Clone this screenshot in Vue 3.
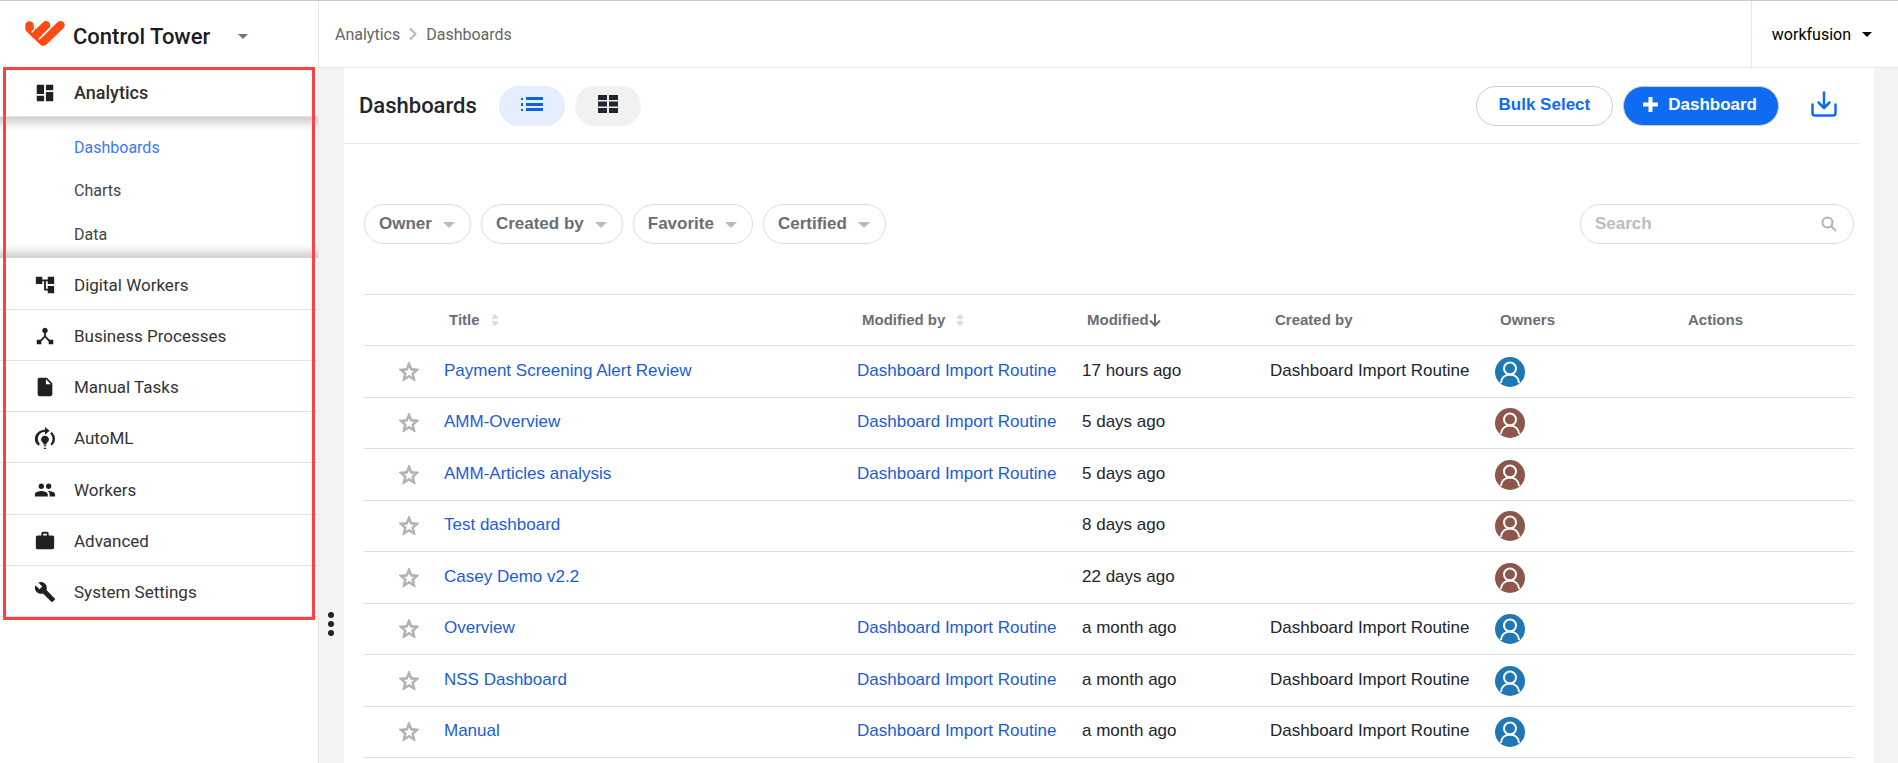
<template>
  <div class="page">
    <aside class="sidebar">
      <div class="brand">
        <svg class="logo" viewBox="0 0 40 25" width="40" height="25" fill="none" stroke-linecap="round" stroke-linejoin="round">
          <path d="M4.500 4.500 L4.500 7.500 L18 20.500 M21 4.200 L11 14 M35.500 4.200 L18.500 20.500" stroke="#ff4b12" stroke-width="8.500" />
          <path d="M10.500 5.500 Q10 8.500 7 11 M14.300 18 L25 7.500" stroke="#fff" stroke-width="1.500" />
        </svg>
        <h1>Control Tower</h1>
        <button class="brand-toggle" type="button" aria-label="Switch application"><i class="caret"></i></button>
      </div>

      <nav class="menu">
        <a href="#" class="item current">
          <svg class="icon" viewBox="0 0 24 24"><path :d="icons.analytics" /></svg>
          <span>Analytics</span>
        </a>
        <div class="submenu">
          <a v-for="s in subItems" :key="s" href="#" :class="{ active: s === 'Dashboards' }">{{ s }}</a>
        </div>
        <a v-for="m in menu" :key="m.label" href="#" class="item">
          <svg class="icon" viewBox="0 0 24 24"><path :d="icons[m.icon]" /></svg>
          <span>{{ m.label }}</span>
        </a>
      </nav>
    </aside>

    <div class="main">
      <header class="topbar">
        <div class="crumbs">
          <a href="#">Analytics</a>
          <svg viewBox="0 0 8 14" width="8" height="14"><path d="M1 1.500l5.500 5.500L1 12.500" fill="none" stroke="#b5b5b5" stroke-width="2" /></svg>
          <span>Dashboards</span>
        </div>
        <button class="user" type="button">workfusion<i class="caret"></i></button>
      </header>

      <div class="body">
        <button class="handle" type="button" aria-label="Resize menu"><i></i><i></i><i></i></button>

        <section class="content">
          <div class="title-bar">
            <h2>Dashboards</h2>
            <button class="view on" type="button" aria-label="List view">
              <svg viewBox="0 0 22 15" width="22" height="15" fill="#0f62e6">
                <path d="M0 1h2v2H0zM5 0h17v3H5zM0 6h2v3H0zM5 6h17v3H5zM0 12h2v2H0zM5 11h17v3H5z" />
              </svg>
            </button>
            <button class="view" type="button" aria-label="Card view">
              <svg viewBox="0 0 20 18" width="20" height="18" fill="#20252e">
                <path d="M0 0h9v5H0zM11 0h9v5h-9zM0 6.500h9v5H0zM11 6.500h9v5h-9zM0 13h9v5H0zM11 13h9v5h-9z" />
              </svg>
            </button>
            <div class="actions">
              <button class="btn" type="button">Bulk Select</button>
              <button class="btn primary" type="button">
                <svg viewBox="0 0 15 15" width="15" height="15"><path d="M7.500 0v15M0 7.500h15" stroke="#fff" stroke-width="4" /></svg>
                Dashboard
              </button>
              <button class="import" type="button" aria-label="Import dashboards">
                <svg viewBox="0 0 26 26" width="26" height="26" fill="none" stroke="#0f6bf2" stroke-width="2.500" stroke-linecap="round" stroke-linejoin="round">
                  <path d="M13 1.500v15M7.500 11.500l5.500 5.500 5.500-5.500" />
                  <path d="M1.500 13.500V22q0 2.500 2.500 2.500h18q2.500 0 2.500-2.500v-8.500" />
                </svg>
              </button>
            </div>
          </div>

          <div class="filters">
            <button v-for="f in filters" :key="f" class="filter" type="button">{{ f }}<i class="caret"></i></button>
            <label class="search">
              <input type="text" placeholder="Search" aria-label="Search" />
              <svg viewBox="0 0 16 16" width="16" height="16" fill="none" stroke="#b2b2b2" stroke-width="2">
                <circle cx="6.500" cy="6.500" r="5" /><path d="M10 10l5 5" />
              </svg>
            </label>
          </div>

          <table>
            <colgroup>
              <col class="c-star" /><col /><col class="c-wide" /><col class="c-mid" />
              <col class="c-wide" /><col class="c-mid" /><col class="c-last" />
            </colgroup>
            <thead>
              <tr>
                <th></th>
                <th>Title<svg class="sort" viewBox="0 0 8 14"><path :d="icons.sort" /></svg></th>
                <th>Modified by<svg class="sort" viewBox="0 0 8 14"><path :d="icons.sort" /></svg></th>
                <th>Modified<svg class="down" viewBox="0 0 12 14"><path d="M6 1v11M1 7.500l5 5 5-5" /></svg></th>
                <th>Created by</th>
                <th>Owners</th>
                <th>Actions</th>
              </tr>
            </thead>
            <tbody>
              <tr v-for="r in rows" :key="r.title">
                <td class="star-cell">
                  <button class="star" type="button" :aria-label="'Favorite ' + r.title">
                    <svg viewBox="0 0 24 24" width="24" height="24"><path :d="icons.star" /></svg>
                  </button>
                </td>
                <td><a href="#">{{ r.title }}</a></td>
                <td><a v-if="r.by" href="#">{{ r.by }}</a></td>
                <td>{{ r.modified }}</td>
                <td>{{ r.created }}</td>
                <td class="owner-cell">
                  <span class="avatar" :class="r.created ? 'blue' : 'brown'">
                    <svg viewBox="0 0 30 30" width="30" height="30" fill="none" stroke="#fff" stroke-width="2">
                      <circle cx="15" cy="11.500" r="6" />
                      <path d="M6 26c0-5 4-8.500 9-8.500s9 3.500 9 8.500" />
                    </svg>
                  </span>
                </td>
                <td></td>
              </tr>
            </tbody>
          </table>
        </section>
      </div>
    </div>
  </div>
</template>

<script setup>
const subItems = ['Dashboards', 'Charts', 'Data']

const menu = [
  { label: 'Digital Workers', icon: 'digital' },
  { label: 'Business Processes', icon: 'process' },
  { label: 'Manual Tasks', icon: 'file' },
  { label: 'AutoML', icon: 'automl' },
  { label: 'Workers', icon: 'people' },
  { label: 'Advanced', icon: 'bag' },
  { label: 'System Settings', icon: 'wrench' },
]

const filters = ['Owner', 'Created by', 'Favorite', 'Certified']

const routine = 'Dashboard Import Routine'
const rows = [
  { title: 'Payment Screening Alert Review', by: routine, modified: '17 hours ago', created: routine },
  { title: 'AMM-Overview', by: routine, modified: '5 days ago' },
  { title: 'AMM-Articles analysis', by: routine, modified: '5 days ago' },
  { title: 'Test dashboard', modified: '8 days ago' },
  { title: 'Casey Demo v2.2', modified: '22 days ago' },
  { title: 'Overview', by: routine, modified: 'a month ago', created: routine },
  { title: 'NSS Dashboard', by: routine, modified: 'a month ago', created: routine },
  { title: 'Manual', by: routine, modified: 'a month ago', created: routine },
]

const icons = {
  analytics: 'M3 13h8V3H3v10zm0 8h8v-6H3v6zm10 0h8V11h-8v10zm0-18v6h8V3h-8z',
  digital: 'M22 11V3h-7v3H9V3H2v8h7V8h2v10h4v3h7v-8h-7v3h-2V8h2v3h7z',
  process: 'M17 16l-4-4V8.820C14.160 8.400 15 7.300 15 6c0-1.660-1.340-3-3-3S9 4.340 9 6c0 1.300.84 2.400 2 2.820V12l-4 4H3v5h5v-3.050l4-4.200 4 4.200V21h5v-5h-4z',
  file: 'M6 2c-1.100 0-1.990.9-1.990 2L4 20c0 1.100.89 2 1.990 2H18c1.100 0 2-.9 2-2V8l-6-6H6zm7 7V3.500L18.500 9H13z',
  automl: 'M10.500 20h3v1h-3zM10.800 24h2.400v-1.500h-2.400zM12 9.500c-2.500 0-4.300 1.900-4.300 4.200 0 2.500 2.500 2.900 2.800 5.300h3c.3-2.400 2.800-2.800 2.800-5.300 0-2.300-1.800-4.200-4.300-4.200zM12 3V0l5 4.200-5 4.200V5.300c-4.200 0-7.700 3.400-7.700 7.700 0 2.200.9 4.100 2.300 5.500L5 20.200C2.100 18.400 1 15.800 1 13 1 7.500 6 3 12 3zM19.300 5.500l-1.800 1.700c1.700 1.400 2.700 3.500 2.700 5.800 0 2.200-.9 4.100-2.300 5.500l1.600 1.700c1.900-1.800 3.400-4.400 3.400-7.200 0-3-1.500-5.700-3.600-7.500z',
  people: 'M16 11c1.660 0 2.990-1.340 2.990-3S17.660 5 16 5c-1.660 0-3 1.340-3 3s1.340 3 3 3zm-8 0c1.660 0 2.990-1.340 2.990-3S9.660 5 8 5C6.340 5 5 6.340 5 8s1.340 3 3 3zm0 2c-2.330 0-7 1.170-7 3.500V19h14v-2.500c0-2.330-4.670-3.500-7-3.500zm8 0c-.29 0-.62.02-.97.05 1.160.84 1.970 1.970 1.970 3.450V19h6v-2.500c0-2.330-4.670-3.500-7-3.500z',
  bag: 'M20 6h-4V4c0-1.110-.89-2-2-2h-4c-1.110 0-2 .89-2 2v2H4c-1.110 0-1.990.89-1.990 2L2 19c0 1.110.89 2 2 2h16c1.110 0 2-.89 2-2V8c0-1.110-.89-2-2-2zm-6 0h-4V4h4v2z',
  wrench: 'M22.700 19l-9.100-9.100c.9-2.300.4-5-1.500-6.900-2-2-5-2.400-7.400-1.300L9 6 6 9 1.600 4.700C.4 7.100.9 10.100 2.900 12.100c1.900 1.900 4.600 2.400 6.900 1.500l9.100 9.100c.4.4 1 .4 1.400 0l2.300-2.300c.5-.4.5-1.100.1-1.400z',
  star: 'M22 9.240l-7.190-.62L12 2 9.190 8.630 2 9.240l5.460 4.730L5.820 21 12 17.270 18.180 21l-1.630-7.030L22 9.240zM12 15.400l-3.760 2.270 1-4.280-3.320-2.880 4.380-.38L12 6.100l1.710 4.040 4.380.38-3.320 2.880 1 4.280L12 15.400z',
  sort: 'M4 1Q7 2.500 7 6H1Q1 2.500 4 1zM1 8h6Q7 11.500 4 13 1 11.500 1 8z',
}
</script>

<style>
body { background: #fff; }
</style>

<style scoped>
.page { display: flex; min-height: 100vh; box-sizing: border-box; border-top: 1px solid #ccc; font-family: Roboto, sans-serif; color: #20252e; overflow: hidden; }
.page * { box-sizing: border-box; }
a { color: inherit; text-decoration: none; }
button { padding: 0; border: 0; background: none; font-family: inherit; color: inherit; cursor: pointer; }
svg { display: block; flex: none; }

.caret { display: inline-block; border: 5px solid transparent; border-top-color: currentColor; border-bottom: 0; }

.sidebar { width: 319px; flex: none; border-right: 1px solid #e6e6e6; }
.brand { display: flex; align-items: center; height: 66px; padding-left: 25px; color: #1c1c1c; }
.logo { margin-bottom: 2px; }
.brand h1 { margin: 4px 0 0 8px; font-size: 22px; font-weight: 500; }
.brand-toggle { margin-left: 28px; color: #70757a; }

.menu { position: relative; padding-bottom: 3px; }
.menu::after { content: ''; position: absolute; inset: 0 3px; border: 3px solid #fb4144; pointer-events: none; }
.item { display: flex; align-items: center; gap: 18px; height: 51px; padding: 2px 0 0 34px; border-bottom: 1px solid #e3e3e3; font-size: 17px; color: #333; }
.item:nth-child(4n+3) { height: 52px; }
.icon { width: 22px; height: 22px; fill: #231f20; }
.item.current { height: 50px; font-size: 18px; font-weight: 500; color: #2e2e2e; }
.submenu { display: flex; flex-direction: column; height: 141px; padding: 9px 0 2px 74px; font-size: 16px; color: #444; box-shadow: inset 0 14px 10px -8px #ccc, inset 0 -14px 10px -8px #ccc; }
.submenu a { flex: 1; display: flex; align-items: center; }
.submenu .active { color: #3b78ff; }

.main { flex: 1; min-width: 0; display: flex; flex-direction: column; }
.topbar { display: flex; justify-content: space-between; height: 67px; border-bottom: 1px solid #e6e6e6; }
.crumbs { display: flex; align-items: center; gap: 9px; padding-left: 16px; font-size: 16px; color: #666; }
.user { display: flex; align-items: center; gap: 11px; padding: 0 26px 0 20px; border-left: 1px solid #e6e6e6; font-size: 16px; color: #000; }

.body { flex: 1; display: flex; padding-right: 24px; background: #f4f4f4; }
.handle { width: 25px; display: flex; flex-direction: column; justify-content: flex-end; align-items: center; gap: 3px; padding: 0 2px 127px 0; }
.handle i { width: 6px; height: 6px; border-radius: 50%; background: #222; }
.content { flex: 1; min-width: 0; background: #fff; font-family: "Liberation Sans", Arial, sans-serif; }

.title-bar { display: flex; align-items: center; gap: 10px; height: 76px; margin-right: 15px; padding-left: 15px; border-bottom: 1px solid #e6e6e6; }
.title-bar h2 { margin: 0 12px 0 0; font: 500 22px Roboto, sans-serif; }
.view { display: flex; align-items: center; justify-content: center; width: 66px; height: 40px; padding-bottom: 3px; border-radius: 20px; background: #f1f1f1; }
.view.on { background: #e4eefc; }
.actions { display: flex; align-items: center; gap: 10px; margin-left: auto; padding-right: 22px; }
.btn { display: flex; align-items: center; gap: 10px; height: 40px; padding: 0 22px 2px; border: 1px solid #ccc; border-radius: 20px; font-size: 17px; font-weight: bold; color: #0f6bf2; }
.btn.primary { padding: 0 21px 2px 19px; background: #0f6bf2; color: #fff; }
.import { margin-left: 22px; padding-bottom: 4px; }

.filters { display: flex; gap: 10px; margin: 60px 20px 50px; }
.filter { display: flex; align-items: center; gap: 11px; height: 40px; padding: 0 15px 0 14px; border: 1px solid #dcdcdc; border-radius: 20px; font-size: 17px; font-weight: bold; color: #6b6e75; }
.filter .caret { border-width: 6px 6px 0; margin-top: 2px; color: #b9b9b9; }
.search { display: flex; align-items: center; width: 274px; height: 40px; margin-left: auto; padding: 0 16px 0 14px; border: 1px solid #dcdcdc; border-radius: 20px; }
.search input { flex: 1; min-width: 0; padding: 0; border: 0; outline: 0; background: none; font: bold 17px "Liberation Sans", Arial, sans-serif; color: #444; }
.search input::placeholder { color: #bdbdbd; }

table { width: calc(100% - 40px); margin: 0 20px; table-layout: fixed; border-collapse: separate; border-spacing: 0; border-top: 1px solid #dfdfdf; }
.c-star { width: 76px; }
.c-wide { width: 225px; }
.c-mid { width: 188px; }
.c-last { width: 175px; }
th { height: 51px; padding: 0 0 2px 9px; border-bottom: 1px solid #dfdfdf; font-size: 15px; text-align: left; color: #6b6e75; }
th svg { display: inline-block; height: 14px; vertical-align: -2px; }
.sort { width: 8px; margin-left: 11px; fill: #dedede; }
.down { width: 12px; fill: none; stroke: #6b6e75; stroke-width: 2; }
td { height: 51px; padding: 0 0 2px 4px; border-bottom: 1px solid #dfdfdf; font-size: 17px; white-space: nowrap; }
tbody tr:nth-child(odd) td { height: 52px; }
td a { color: #1a5cd8; }
.star-cell { padding: 0 0 0 33px; }
.owner-cell { padding-bottom: 0; }
.star { display: block; }
.star svg { fill: #b2b2b2; stroke: #b2b2b2; stroke-width: 1; }
.avatar { display: block; width: 30px; height: 30px; border-radius: 50%; overflow: hidden; }
.blue { background: #1f78b4; }
.brown { background: #8c564b; }
</style>
